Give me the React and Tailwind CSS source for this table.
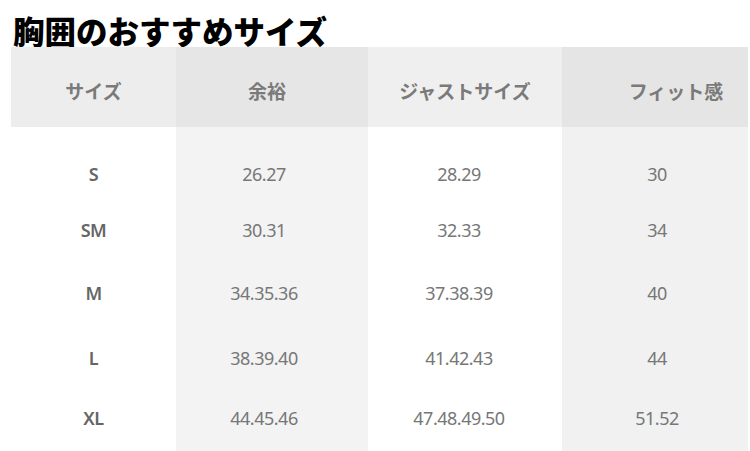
import React from "react";

const jp = "font-['Noto_Sans_CJK_JP',sans-serif]";
const num = "font-['Noto_Sans','Noto_Sans_CJK_JP',sans-serif]";

const rowHeights = ["h-[56px]", "h-[56px]", "h-[70px]", "h-[60px]", "h-[60px]"];

const columns = [
  {
    title: "サイズ",
    width: "w-[165px]",
    headBg: "bg-[#ededed]",
    bodyBg: "bg-white",
    headPad: "",
    bodyPad: "",
    cellText: "font-semibold text-[#666]",
    values: ["S", "SM", "M", "L", "XL"],
  },
  {
    title: "余裕",
    width: "w-[192px]",
    headBg: "bg-[#e6e6e6]",
    bodyBg: "bg-[#f3f3f3]",
    headPad: "pr-[10px]",
    bodyPad: "pr-[16px]",
    cellText: "text-[#777]",
    values: ["26.27", "30.31", "34.35.36", "38.39.40", "44.45.46"],
  },
  {
    title: "ジャストサイズ",
    width: "w-[194px]",
    headBg: "bg-[#efefef]",
    bodyBg: "bg-white",
    headPad: "",
    bodyPad: "pr-[12px]",
    cellText: "text-[#777]",
    values: ["28.29", "32.33", "37.38.39", "41.42.43", "47.48.49.50"],
  },
  {
    title: "フィット感",
    width: "w-[186px]",
    headBg: "bg-[#e5e5e5]",
    bodyBg: "bg-[#f1f1f1]",
    headPad: "pl-[42px]",
    bodyPad: "pl-[4px]",
    cellText: "text-[#777]",
    values: ["30", "34", "40", "44", "51.52"],
  },
];

export default function App() {
  return (
    <div className="h-[451px] w-[750px] overflow-hidden bg-white">
      <div
        className={`h-[47px] pl-[13px] pt-[15px] text-[31.5px] leading-[31px] font-black text-black ${jp}`}
      >
        胸囲のおすすめサイズ
      </div>
      <div className="ml-[11px] flex">
        {columns.map((col) => (
          <div key={col.title} className={`flex flex-col ${col.width}`}>
            <div
              className={`flex h-[80px] items-center justify-center pt-[9px] text-[19px] font-bold text-[#7a7a7a] ${jp} ${col.headBg} ${col.headPad}`}
            >
              {col.title}
            </div>
            <div className={`h-[324px] pt-[19px] ${col.bodyBg}`}>
              {col.values.map((v, i) => (
                <div
                  key={v}
                  className={`flex items-center justify-center text-[18px] tracking-[-0.5px] ${num} ${rowHeights[i]} ${col.cellText} ${col.bodyPad}`}
                >
                  {v}
                </div>
              ))}
            </div>
          </div>
        ))}
      </div>
    </div>
  );
}
